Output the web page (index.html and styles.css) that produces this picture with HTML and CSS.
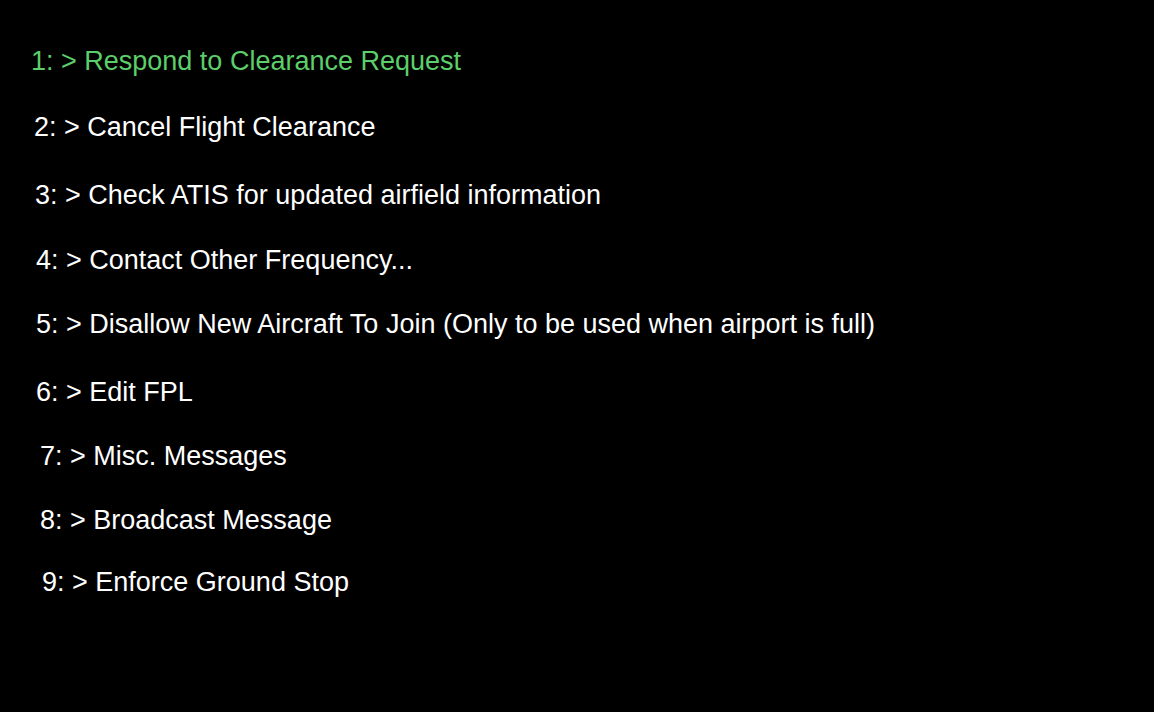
FILE: index.html
```html
<!DOCTYPE html>
<html>
<head>
<meta charset="utf-8">
<link rel="stylesheet" href="styles.css">
</head>
<body>
<ul class="menu">
  <li class="item active">1: &gt; Respond to Clearance Request</li>
  <li class="item">2: &gt; Cancel Flight Clearance</li>
  <li class="item">3: &gt; Check ATIS for updated airfield information</li>
  <li class="item">4: &gt; Contact Other Frequency...</li>
  <li class="item">5: &gt; Disallow New Aircraft To Join (Only to be used when airport is full)</li>
  <li class="item">6: &gt; Edit FPL</li>
  <li class="item">7: &gt; Misc. Messages</li>
  <li class="item">8: &gt; Broadcast Message</li>
  <li class="item">9: &gt; Enforce Ground Stop</li>
</ul>
</body>
</html>
```
FILE: styles.css
```css
html, body {
  margin: 0;
  padding: 0;
  background: #000;
  width: 1154px;
  height: 712px;
  overflow: hidden;
}
.menu {
  list-style: none;
  margin: 0;
  padding: 45px 0 0 0;
  display: flex;
  flex-direction: column;
  font-family: "Liberation Sans", Arial, sans-serif;
  font-size: 27px;
  line-height: 32px;
  color: #fff;
}
.item {
  white-space: pre;
}
.item.active {
  color: #5cce6a;
}
.item:nth-child(1) { padding-left: 31px; }
.item:nth-child(2) { margin-top: 34px; padding-left: 34px; }
.item:nth-child(3) { margin-top: 36px; padding-left: 35px; }
.item:nth-child(4) { margin-top: 33px; padding-left: 36px; }
.item:nth-child(5) { margin-top: 32px; padding-left: 36px; }
.item:nth-child(6) { margin-top: 36px; padding-left: 36px; }
.item:nth-child(7) { margin-top: 32px; padding-left: 40px; }
.item:nth-child(8) { margin-top: 32px; padding-left: 40px; }
.item:nth-child(9) { margin-top: 30px; padding-left: 42px; }
```
